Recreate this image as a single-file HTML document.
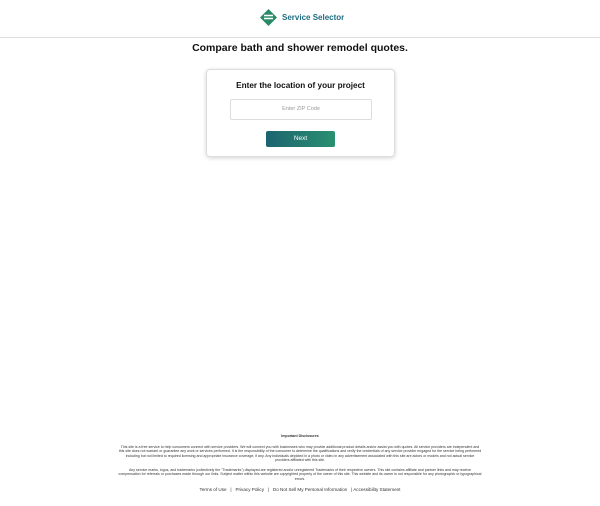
<!DOCTYPE html>
<html><head><style>
body{margin:0;width:600px;height:506px;background:#fff;font-family:"Liberation Sans",sans-serif;position:relative;overflow:hidden}
.hdr{height:37px;border-bottom:1px solid #ddd;position:relative}
.logo{position:absolute;left:260px;top:9px;display:flex;align-items:center}
.logo span{color:#1f6d82;font-weight:bold;font-size:8px;margin-left:5px}
h1{position:absolute;top:42px;left:0;width:600px;text-align:center;margin:0;font-size:10.5px;font-weight:bold;color:#111}
.card{position:absolute;left:206px;top:69px;width:187px;height:86px;border:1px solid #ddd;border-radius:4px;box-shadow:0 1px 4px rgba(0,0,0,.18)}
.card h2{margin:0;position:absolute;top:11px;width:100%;text-align:center;font-size:8.2px;font-weight:bold;color:#111}
.inp{position:absolute;left:23px;top:29px;width:140px;height:19px;border:1px solid #ddd;border-radius:2px;text-align:center;font-size:5.5px;color:#999;line-height:19px}
.btn{position:absolute;left:59px;top:61px;width:69px;height:16px;border-radius:2px;background:linear-gradient(90deg,#1c6470,#2a9070);color:#fff;font-size:6.5px;text-align:center;line-height:16px}
.ft{position:absolute;left:118px;width:364px;text-align:center;font-size:3.55px;color:#333;line-height:4.3px}
</style></head><body>
<div class="hdr"><div class="logo">
<svg width="17" height="17" viewBox="0 0 17 17"><path d="M8.5 0L17 8.5 8.5 17 0 8.5Z" fill="#2a8a68"/><path d="M4 6.5h9M4 9.5h9" stroke="#fff" stroke-width="1.6"/></svg>
<span>Service Selector</span></div></div>
<h1>Compare bath and shower remodel quotes.</h1>
<div class="card"><h2>Enter the location of your project</h2><div class="inp">Enter ZIP Code</div><div class="btn">Next</div></div>
<div class="ft" style="top:434px;font-weight:bold">Important Disclosures</div>
<div class="ft" style="top:445px">This site is a free service to help consumers connect with service providers. We will connect you with businesses who may provide additional product details and/or assist you with quotes. All service providers are independent and this site does not warrant or guarantee any work or services performed. It is the responsibility of the consumer to determine the qualifications and verify the credentials of any service provider engaged for the service being performed including but not limited to required licensing and appropriate insurance coverage, if any. Any individuals depicted in a photo or video in any advertisement associated with this site are actors or models and not actual service providers affiliated with this site.</div>
<div class="ft" style="top:468px">Any service marks, logos, and trademarks (collectively the "Trademarks") displayed are registered and/or unregistered Trademarks of their respective owners. This site contains affiliate and partner links and may receive compensation for referrals or purchases made through our links. Subject matter within this website are copyrighted property of the owner of this site. This website and its owner is not responsible for any photographic or typographical errors.</div>
<div class="ft" style="top:488px;font-size:4.6px">Terms of Use &nbsp; | &nbsp; Privacy Policy &nbsp; | &nbsp; Do Not Sell My Personal Information &nbsp; | Accessibility Statement</div>
</body></html>
